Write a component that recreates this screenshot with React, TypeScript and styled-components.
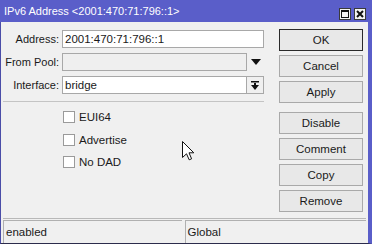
import styled, { createGlobalStyle } from 'styled-components';

const GlobalStyle = createGlobalStyle`
    html, body {
        margin: 0;
        padding: 0;
        background: #f0f0f0;
    }
    * {
        box-sizing: border-box;
    }
`;

const Window = styled.div`
    position: relative;
    width: 372px;
    height: 244px;
    display: flex;
    flex-direction: column;
    font-family: "Liberation Sans", Arial, sans-serif;
    font-size: 11px;
    color: #1a1a1a;
    overflow: hidden;
`;

const TitleBar = styled.div`
    height: 22px;
    flex: none;
    display: flex;
    align-items: center;
    justify-content: space-between;
    padding: 0 6px 0 4px;
    background: #5a5ec9;
    color: #ffffff;
`;

const Title = styled.div`
    font-size: 11px;
    white-space: nowrap;
`;

const TitleButtons = styled.div`
    display: flex;
    gap: 3px;
    margin-top: 5px;
`;

const TitleButton = styled.div`
    width: 12px;
    height: 12px;
    display: flex;
    align-items: center;
    justify-content: center;
    background: #f4f4f4;
    border: 1px solid #3a3a3a;
`;

const Frame = styled.div`
    flex: 1;
    display: flex;
    flex-direction: column;
    background: #f0f0f0;
    border-left: 1px solid #4a4da8;
    border-right: 4px solid #5a5ec9;
    border-bottom: 1px solid #2c2c4c;
`;

const Body = styled.div`
    flex: 1;
    display: flex;
    padding-top: 7px;
`;

const FormPane = styled.div`
    width: 263px;
    padding-top: 1px;
    display: flex;
    flex-direction: column;
`;

const FieldRow = styled.div`
    display: grid;
    grid-template-columns: 58px 1fr;
    column-gap: 3px;
    align-items: center;
    height: 18px;
    margin-bottom: 5px;
`;

const Label = styled.div`
    text-align: right;
    white-space: nowrap;
`;

const InputGroup = styled.div`
    display: flex;
    height: 18px;
`;

const TextBox = styled.div<{ $disabled?: boolean }>`
    flex: 1;
    height: 18px;
    padding: 0 2px;
    line-height: 16px;
    background: ${props => props.$disabled ? '#efefef' : '#ffffff'};
    border: 1px solid #a8a8a8;
    white-space: nowrap;
    font-size: 11.5px;
`;

const Trailing = styled.div<{ $framed?: boolean }>`
    width: 17px;
    flex: none;
    display: flex;
    align-items: center;
    justify-content: center;
    background: #f0f0f0;
    border: ${props => props.$framed ? '1px solid #a8a8a8' : 'none'};
    border-left: none;
`;

const Separator = styled.div`
    height: 1px;
    margin: 2px 0 4px 2px;
    background: #c4c4c4;
`;

const CheckList = styled.div`
    display: flex;
    flex-direction: column;
    padding-left: 62px;
`;

const CheckRow = styled.div`
    display: flex;
    align-items: center;
    gap: 4px;
    height: 22.5px;
    padding-bottom: 0.5px;
    font-size: 11.5px;
`;

const CheckBox = styled.div`
    width: 12px;
    height: 12px;
    background: #ffffff;
    border: 1px solid #9a9a9a;
`;

const ButtonColumn = styled.div`
    width: 84px;
    margin-left: 15px;
    display: flex;
    flex-direction: column;
    gap: 4px;
`;

const Button = styled.div<{ $default?: boolean; $gapBefore?: boolean }>`
    height: 22px;
    display: flex;
    align-items: center;
    justify-content: center;
    background: #e8e8e8;
    border: 1px solid ${props => props.$default ? '#2a2a2a' : '#a9a9a9'};
    margin-top: ${props => props.$gapBefore ? '5px' : '0'};
    font-size: 11.5px;
`;

const StatusBar = styled.div`
    flex: none;
    margin: 0 2px;
    padding-top: 1px;
    border-top: 1px solid #b8b8b8;
    display: flex;
    gap: 3px;
    height: 25px;
`;

const StatusField = styled.div<{ $width: number }>`
    width: ${props => props.$width}px;
    display: flex;
    align-items: center;
    padding-left: 2px;
    border-top: 1px solid #b0b0b0;
    border-left: 1px solid #b0b0b0;
    font-size: 11.5px;
`;

const Cursor = styled.svg`
    position: absolute;
    left: 182px;
    top: 141px;
`;

const checks = ['EUI64', 'Advertise', 'No DAD'];
const buttons = ['OK', 'Cancel', 'Apply', 'Disable', 'Comment', 'Copy', 'Remove'];

const App = () => {
    return (
        <>
            <GlobalStyle />
            <Window>
                <TitleBar>
                    <Title>IPv6 Address &lt;2001:470:71:796::1&gt;</Title>
                    <TitleButtons>
                        <TitleButton>
                            <svg width="8" height="8" viewBox="0 0 8 8">
                                <rect x="0.5" y="0.5" width="7" height="7" fill="none" stroke="#111" />
                                <rect x="0" y="0" width="8" height="2" fill="#111" />
                            </svg>
                        </TitleButton>
                        <TitleButton>
                            <svg width="8" height="8" viewBox="0 0 8 8">
                                <path d="M1 1 L7 7 M7 1 L1 7" stroke="#111" strokeWidth="2" />
                            </svg>
                        </TitleButton>
                    </TitleButtons>
                </TitleBar>
                <Frame>
                    <Body>
                        <FormPane>
                            <FieldRow>
                                <Label>Address:</Label>
                                <InputGroup>
                                    <TextBox>2001:470:71:796::1</TextBox>
                                </InputGroup>
                            </FieldRow>
                            <FieldRow>
                                <Label>From Pool:</Label>
                                <InputGroup>
                                    <TextBox $disabled />
                                    <Trailing>
                                        <svg width="10" height="6" viewBox="0 0 10 6">
                                            <path d="M0 0 H10 L5 6 Z" fill="#111" />
                                        </svg>
                                    </Trailing>
                                </InputGroup>
                            </FieldRow>
                            <FieldRow>
                                <Label>Interface:</Label>
                                <InputGroup>
                                    <TextBox>bridge</TextBox>
                                    <Trailing $framed>
                                        <svg width="8" height="9" viewBox="0 0 8 9">
                                            <rect x="0" y="0" width="8" height="1.5" fill="#111" />
                                            <rect x="3" y="2" width="2" height="3" fill="#111" />
                                            <path d="M0 4 H8 L4 9 Z" fill="#111" />
                                        </svg>
                                    </Trailing>
                                </InputGroup>
                            </FieldRow>
                            <Separator />
                            <CheckList>
                                {checks.map(c => (
                                    <CheckRow key={c}>
                                        <CheckBox />
                                        {c}
                                    </CheckRow>
                                ))}
                            </CheckList>
                        </FormPane>
                        <ButtonColumn>
                            {buttons.map(b => (
                                <Button key={b} $default={b === 'OK'} $gapBefore={b === 'Disable'}>
                                    {b}
                                </Button>
                            ))}
                        </ButtonColumn>
                    </Body>
                    <StatusBar>
                        <StatusField $width={179}>enabled</StatusField>
                        <StatusField $width={182}>Global</StatusField>
                    </StatusBar>
                </Frame>
                <Cursor width="13" height="20" viewBox="0 0 13 20">
                    <path
                        d="M0.5 0.5 L0.5 16.5 L4.5 12.8 L7.2 18.8 L9.6 17.8 L7 11.8 L11.8 11.8 Z"
                        fill="#ffffff"
                        stroke="#111"
                        strokeWidth="1"
                        strokeLinejoin="miter"
                    />
                </Cursor>
            </Window>
        </>
    );
};

export default App;
